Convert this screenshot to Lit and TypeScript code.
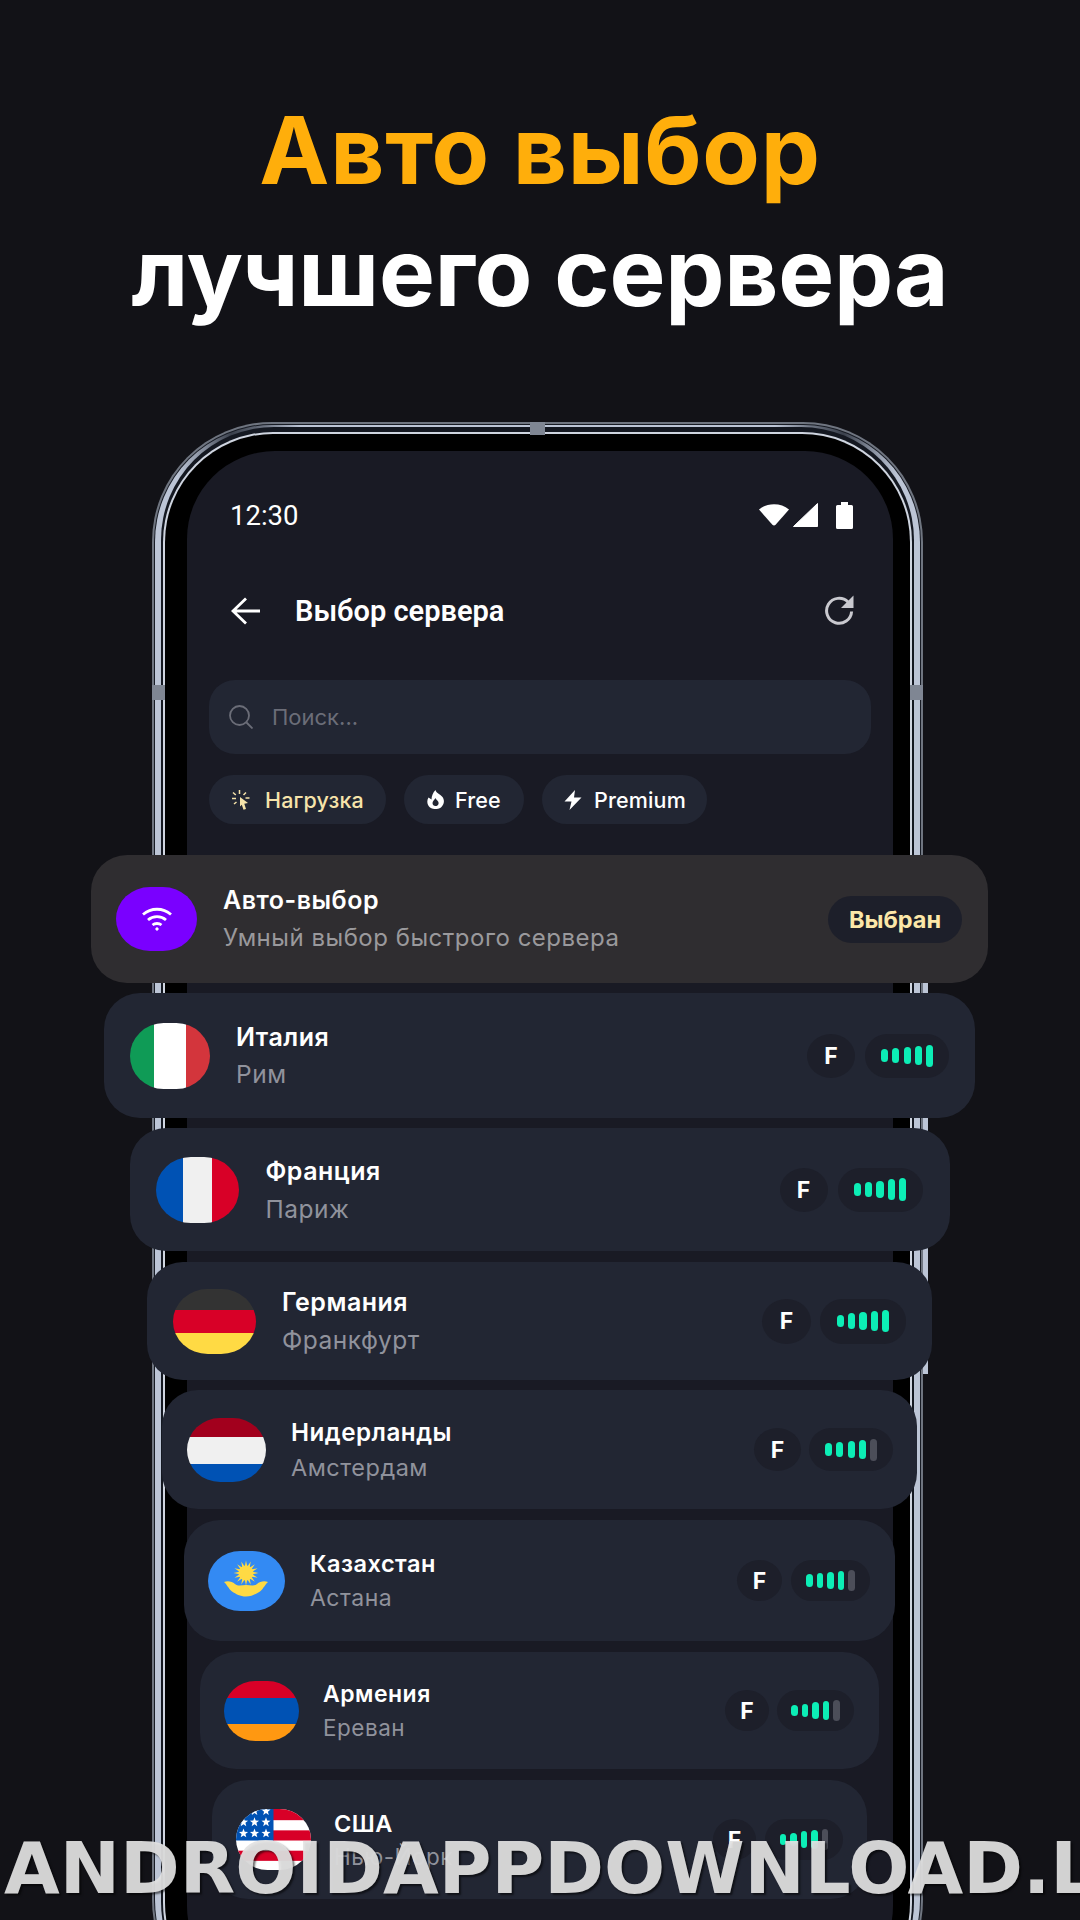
import { LitElement, html, css, svg } from "lit";
import { customElement } from "lit/decorators.js";

interface Row {
  name: string; sub: string; flag: string;
  w: number; h: number; pad: number; fw: number; fh: number; tg: number;
  ns: number; ss: number; ln: number; cw: number; ch: number; pw: number; rp: number; gap: number; s: number; on: number; mt: number;
}

const rows: Row[] = [
  { name: "Италия", sub: "Рим", flag: "it", w: 871, h: 125, pad: 26, fw: 80, fh: 66, tg: 26, ns: 25, ss: 24.5, ln: 37, cw: 48, ch: 44, pw: 84, rp: 26, gap: 10, s: 1, on: 5, mt: 0 },
  { name: "Франция", sub: "Париж", flag: "fr", w: 820, h: 123, pad: 26, fw: 83, fh: 66, tg: 27, ns: 25, ss: 24.5, ln: 38, cw: 48, ch: 44, pw: 85, rp: 27, gap: 10, s: 1.02, on: 5, mt: 0 },
  { name: "Германия", sub: "Франкфурт", flag: "de", w: 785, h: 118, pad: 26, fw: 83, fh: 65, tg: 26, ns: 25, ss: 24.5, ln: 38, cw: 49, ch: 45, pw: 86, rp: 26, gap: 9, s: 1.02, on: 5, mt: 1 },
  { name: "Нидерланды", sub: "Амстердам", flag: "nl", w: 755, h: 119, pad: 25, fw: 79, fh: 64, tg: 25, ns: 24.2, ss: 23.5, ln: 35, cw: 47, ch: 43, pw: 84, rp: 24, gap: 8, s: 1, on: 4, mt: 0 },
  { name: "Казахстан", sub: "Астана", flag: "kz", w: 711, h: 121, pad: 24, fw: 77, fh: 60, tg: 25, ns: 23.5, ss: 23, ln: 34, cw: 45, ch: 41, pw: 79, rp: 25, gap: 9, s: 0.95, on: 4, mt: 1 },
  { name: "Армения", sub: "Ереван", flag: "am", w: 679, h: 117, pad: 24, fw: 75, fh: 60, tg: 24, ns: 23, ss: 22.5, ln: 33, cw: 44, ch: 41, pw: 77, rp: 25, gap: 8, s: 0.93, on: 4, mt: 1 },
  { name: "США", sub: "Нью-Йорк", flag: "us", w: 655, h: 119, pad: 24, fw: 75, fh: 61, tg: 23, ns: 23.5, ss: 22.5, ln: 33, cw: 43, ch: 41, pw: 78, rp: 24, gap: 9, s: 0.93, on: 4, mt: 1 },
];

const star = (x: number, y: number, r: number) => {
  const pts: string[] = [];
  for (let i = 0; i < 10; i++) {
    const a = -Math.PI / 2 + (i * Math.PI) / 5;
    const q = i % 2 ? r * 0.42 : r;
    pts.push(`${(x + q * Math.cos(a)).toFixed(2)},${(y + q * Math.sin(a)).toFixed(2)}`);
  }
  return svg`<polygon points=${pts.join(" ")} fill="#fff"/>`;
};

const flagSvg = (f: string) => {
  if (f === "kz")
    return html`<svg viewBox="0 0 77 60" width="100%" height="100%" preserveAspectRatio="none">
      <rect width="77" height="60" fill="#338af3"/>
      ${Array.from({ length: 16 }, (_, i) => svg`<path d="M38 9.500 L40 19 H36 Z" fill="#ffda44" transform="rotate(${i * 22.5} 38 22)"/>`)}
      <circle cx="38" cy="22" r="7.500" fill="#ffda44"/>
      <path d="M16 31 C20 29.500 24 30.500 27 33 C30 35.500 34 34 38 34 C42 34 46 35.500 49 33 C52 30.500 56 29.500 60 31 C57 33.500 56 37 52 40.500 C48 43 44 45.500 38 45.500 C32 45.500 28 43 24 40.500 C20 37 19 33.500 16 31 Z" fill="#ffda44"/>
    </svg>`;
  if (f === "us")
    return html`<svg viewBox="0 0 75 60" width="100%" height="100%" preserveAspectRatio="none">
      <rect width="75" height="60" fill="#fff"/>
      <rect x="37" y="0" width="38" height="11" fill="#d80027"/>
      <rect x="37" y="21" width="38" height="10" fill="#d80027"/>
      <rect y="41" width="75" height="10" fill="#d80027"/>
      <rect width="37.500" height="31" fill="#0052b4"/>
      ${[7.5, 18.5, 30].map((x) => [2, 13, 24].map((y) => star(x, y, 4.8)))}
    </svg>`;
  return html``;
};

@customElement("app-root")
export class AppRoot extends LitElement {
  static styles = css`
    :host {
      display: block;
      width: 1080px;
      height: 1920px;
      overflow: hidden;
      position: relative;
      background: #121217;
      font-family: Inter, "Noto Sans", sans-serif;
      color: #fff;
    }
    h1 {
      margin: 0;
      padding-top: 89px;
      text-align: center;
      font-size: 94px;
      line-height: 122px;
      font-weight: 700;
      letter-spacing: -0.2px;
    }
    h1 span { display: block; }
    .orange { color: #ffae0b; letter-spacing: 0.7px; }
    .stage {
      display: grid;
      margin-top: 89px;
      position: relative;
      justify-items: center;
      align-items: start;
    }
    .stage > .r1, .stage > .list { grid-area: 1 / 1; }

    .r1, .r2, .r3, .r4, .r5, .r6 { display: flex; box-sizing: border-box; }
    .r2, .r3, .r4, .r5, .r6, .screen { flex: 1; min-width: 0; }
    .r1 { width: 771px; height: 1598px; margin-left: -5px; padding: 2px; border-radius: 120px; background: #6f7580; position: relative; }
    .r2 { padding: 1px; border-radius: 118px; background: #171b24; }
    .r3 {
      padding: 2px 6px;
      border-radius: 117px 117px 112px 112px / 117px;
      background: linear-gradient(90deg, #bcc5d6 0 3%, #8b93a2 6%, #3a404c 10%, #69707e 14%, #bcc5d6 19% 81%, #69707e 86%, #3a404c 90%, #8b93a2 94%, #bcc5d6 97%);
    }
    .r4 { padding: 5px 2px 2px; border-radius: 113px; background: #141821; }
    .r5 { padding: 2px; border-radius: 110px; background: #cfd5e0; }
    .r6 { padding: 17px 17px 17px 22px; border-radius: 108px; background: #000; }
    .screen {
      border-radius: 88px;
      background: #191a24;
      display: flex;
      flex-direction: column;
      padding: 0 22px;
      box-sizing: border-box;
    }
    .nub { position: absolute; background: #7f8693; }
    .nub.top { left: 378px; top: 0; width: 15px; height: 13px; }
    .nub.l { left: 0; top: 263px; width: 13px; height: 15px; }
    .nub.rt { right: 0; top: 263px; width: 13px; height: 15px; }
    .wob {
      position: absolute;
      left: 771px;
      top: 560px;
      width: 5px;
      height: 392px;
      background: #bcc5d6;
    }

    .status {
      height: 64px;
      margin-top: 32px;
      padding: 0 18px 0 21px;
      display: flex;
      align-items: center;
      justify-content: space-between;
      font-family: Roboto, sans-serif;
      font-size: 27.5px;
    }
    .status .ic { display: flex; align-items: center; }
    .status svg { display: block; }
    .status .sg { margin-left: 4px; }
    .status .bt { margin-left: 18px; }
    .bar {
      margin-top: 34px;
      height: 60px;
      display: flex;
      align-items: center;
      padding: 0 16px 0 22px;
    }
    .bar .title {
      margin-left: 34px;
      font-family: Roboto, sans-serif;
      font-size: 29px;
      font-weight: 600;
      flex: 1;
    }
    .bar .ref { margin-top: -3px; }
    .search {
      margin-top: 39px;
      height: 74px;
      border-radius: 26px;
      background: #222633;
      display: flex;
      align-items: center;
      padding-left: 20px;
      color: #6b6d78;
      font-size: 22px;
      gap: 19px;
    }
    .chips { margin-top: 21px; display: flex; gap: 18px; }
    .chip {
      height: 49px;
      border-radius: 25px;
      background: #222633;
      display: flex;
      align-items: center;
      box-sizing: border-box;
      font-size: 21.5px;
      font-weight: 500;
      letter-spacing: 0.15px;
    }
    .chip.a { width: 177px; padding-left: 23px; gap: 15px; color: #f6e3aa; }
    .chip.b { width: 120px; padding-left: 23px; gap: 11px; }
    .chip.c { width: 165px; padding-left: 22px; gap: 12px; }

    .list {
      margin-top: 433px;
      margin-left: -1px;
      display: flex;
      flex-direction: column;
      align-items: center;
      gap: 10px;
      z-index: 1;
    }
    .row {
      width: var(--w);
      height: var(--h);
      margin-top: var(--mt);
      box-sizing: border-box;
      padding: 0 var(--rp) 0 var(--pad);
      border-radius: 36px;
      background: #222633;
      display: flex;
      align-items: center;
    }
    .row.auto { background: #2f2d30; }
    .flag {
      width: var(--fw);
      height: var(--fh);
      flex: none;
      border-radius: 42% / 50%;
      overflow: hidden;
    }
    .flag svg { display: block; }
    .it { background: linear-gradient(90deg, #0f9b56 0 30%, #fff 30% 70%, #d3353c 70%); }
    .fr { background: linear-gradient(90deg, #0052b4 0 33%, #f0f0f0 33% 68%, #d80027 68%); }
    .de { background: linear-gradient(#333 0 33%, #d80027 33% 67%, #ffda44 67%); }
    .nl { background: linear-gradient(#a2001d 0 29%, #f0f0f0 29% 72%, #0052b4 72%); }
    .am { background: linear-gradient(#d80027 0 29%, #0052b4 29% 72%, #ff9811 72%); }
    .wifi { background: #7a00ff; display: flex; align-items: center; justify-content: center; }
    .text { margin-left: var(--tg); flex: 1; min-width: 0; }
    .name { font-size: var(--ns); line-height: var(--ln); font-weight: 600; letter-spacing: 0.5px; }
    .sub { font-size: var(--ss); line-height: var(--ln); color: #90929c; letter-spacing: 0.5px; }
    .auto .sub { color: #9a999c; }
    .right { display: flex; align-items: center; gap: var(--gap); flex: none; }
    .f {
      width: var(--cw);
      height: var(--ch);
      border-radius: 50%;
      background: #1d1f2a;
      display: flex;
      align-items: center;
      justify-content: center;
      font-size: 23px;
      font-weight: 700;
    }
    .sig {
      width: var(--pw);
      height: var(--ch);
      border-radius: 22px;
      background: #1d1f2a;
      display: flex;
      align-items: center;
      justify-content: center;
      gap: calc(4.2px * var(--s));
    }
    .sig i {
      display: block;
      width: calc(7px * var(--s));
      border-radius: 4px;
      background: #0ceeb6;
    }
    .sig i.off { background: #4c4e59; }
    .chosen {
      width: 134px;
      height: 47px;
      border-radius: 24px;
      background: #1d1f2a;
      color: #fce7a8;
      display: flex;
      align-items: center;
      justify-content: center;
      font-size: 23.5px;
      font-weight: 700;
      flex: none;
    }
    .wm {
      position: absolute;
      left: 4px;
      top: 1832px;
      line-height: 72px;
      font-family: "DejaVu Sans", sans-serif;
      font-weight: 700;
      font-size: 72px;
      white-space: nowrap;
      color: rgba(226, 226, 226, 0.93);
      text-shadow: 2px 2px 2px rgba(0, 0, 0, 0.55);
      z-index: 2;
    }
  `;

  private vars(r: Partial<Row>) {
    return `--w:${r.w}px;--h:${r.h}px;--pad:${r.pad}px;--fw:${r.fw}px;--fh:${r.fh}px;--tg:${r.tg}px;--ns:${r.ns}px;--ss:${r.ss}px;--ln:${r.ln}px;--cw:${r.cw}px;--ch:${r.ch}px;--pw:${r.pw}px;--rp:${r.rp}px;--gap:${r.gap}px;--s:${r.s};--mt:${r.mt ?? 0}px`;
  }

  private bars(r: Row) {
    return [12.7, 15, 17.3, 19.7, 22].map(
      (h, i) => html`<i class=${i < r.on ? "" : "off"} style="height:${h * r.s}px"></i>`
    );
  }

  render() {
    return html`
      <h1><span class="orange">Авто выбор</span><span>лучшего сервера</span></h1>
      <div class="stage">
        <div class="r1">
          <div class="r2"><div class="r3"><div class="r4"><div class="r5"><div class="r6">
            <div class="screen">
              <div class="status">
                <span>12:30</span>
                <span class="ic">
                  <svg width="30" height="22" viewBox="0 0 30 22"><path d="M0 5.500C8-1.500 22-1.500 30 5.500L16.600 20.800Q15 22.400 13.400 20.800Z" fill="#fff"/></svg>
                  <svg class="sg" width="25" height="24" viewBox="0 0 25 24"><path d="M24.500.5V23.500H.5Z" fill="#fff" stroke="#fff" stroke-linejoin="round"/></svg>
                  <svg class="bt" width="17" height="27" viewBox="0 0 17 27"><path d="M5 0H12V3H15.500Q17 3 17 4.500V25.500Q17 27 15.500 27H1.500Q0 27 0 25.500V4.500Q0 3 1.500 3H5Z" fill="#fff"/></svg>
                </span>
              </div>
              <div class="bar">
                <svg width="30" height="30" viewBox="0 0 30 30"><path d="M29 15H3M15 2.500L2 15L15 27.500" fill="none" stroke="#fff" stroke-width="2.800"/></svg>
                <span class="title">Выбор сервера</span>
                <svg class="ref" width="31" height="31" viewBox="0 0 31 31"><path d="M24 8A12.500 12.500 0 1 0 27.600 17.500" fill="none" stroke="#c9c9cf" stroke-width="3"/><path d="M29.500 1.500V14H17Z" fill="#c9c9cf"/></svg>
              </div>
              <div class="search">
                <svg width="24" height="24" viewBox="0 0 24 24"><circle cx="10.500" cy="10.500" r="9.500" fill="none" stroke="#6b6d78" stroke-width="1.800"/><path d="M17.500 17.500L23.500 23.500" stroke="#6b6d78" stroke-width="1.800"/></svg>
                <span>Поиск...</span>
              </div>
              <div class="chips">
                <div class="chip a">
                  <svg width="18" height="20" viewBox="0 0 18 20" fill="#f6e3aa"><path d="M8 7L16 13L12.300 13.800L14 19L11.500 19.800L9.800 14.800L8 16.500Z"/><path d="M7.500 0V4M1 2.500L3.800 5M0 8.500H4M2 14L4.500 12M14 2.500L11.500 5M17.500 8H13.500" stroke="#f6e3aa" stroke-width="1.500"/></svg>
                  <span>Нагрузка</span>
                </div>
                <div class="chip b">
                  <svg width="17" height="19" viewBox="0 0 17 19"><path d="M8.500 0C9 3 13 4 15.500 7C18 10.500 17 15 14 17.500C11 19.600 6 19.600 3 17.500C0 15 -.5 10.500 1.500 7.500L4.500 9.500C4.500 6 6 2.500 8.500 0Z" fill="#fff"/><path d="M8.500 8C9 10 12 11 11.600 13.500C11.300 15.500 9.800 16 8.500 16C6.800 16 5.500 14.800 5.500 13C5.500 11 7.500 10 8.500 8Z" fill="#222633"/></svg>
                  <span>Free</span>
                </div>
                <div class="chip c">
                  <svg width="18" height="20" viewBox="0 0 18 20"><path d="M11 0L.5 11.500H7.500L5.500 20L17.500 7.500H10Z" fill="#fff"/></svg>
                  <span>Premium</span>
                </div>
              </div>
            </div>
          </div></div></div></div></div>
          <div class="nub top"></div>
          <div class="nub l"></div>
          <div class="nub rt"></div>
          <div class="wob"></div>
        </div>
        <div class="list">
          <div class="row auto" style=${this.vars({ w: 897, h: 128, pad: 25, fw: 81, fh: 64, tg: 26, ns: 25, ss: 24, ln: 38, rp: 26, gap: 0, s: 1 })}>
            <div class="flag wifi">
              <svg width="32" height="24" viewBox="0 0 32 24" fill="none" stroke="#fff" stroke-width="2.800"><path d="M2 7.500C10 .5 22 .5 30 7.500"/><path d="M7 13C12 8.500 20 8.500 25 13"/><path d="M11.500 18C14 16 18 16 20.500 18"/><circle cx="16" cy="22" r="1.200" fill="#fff" stroke-width="1"/></svg>
            </div>
            <div class="text">
              <div class="name">Авто-выбор</div>
              <div class="sub">Умный выбор быстрого сервера</div>
            </div>
            <div class="chosen">Выбран</div>
          </div>
          ${rows.map(
            (r) => html`
              <div class="row" style=${this.vars(r)}>
                <div class="flag ${r.flag}">${flagSvg(r.flag)}</div>
                <div class="text">
                  <div class="name">${r.name}</div>
                  <div class="sub">${r.sub}</div>
                </div>
                <div class="right">
                  <div class="f">F</div>
                  <div class="sig">${this.bars(r)}</div>
                </div>
              </div>
            `
          )}
        </div>
      </div>
      <div class="wm">ANDROIDAPPDOWNLOAD.L</div>
    `;
  }
}
